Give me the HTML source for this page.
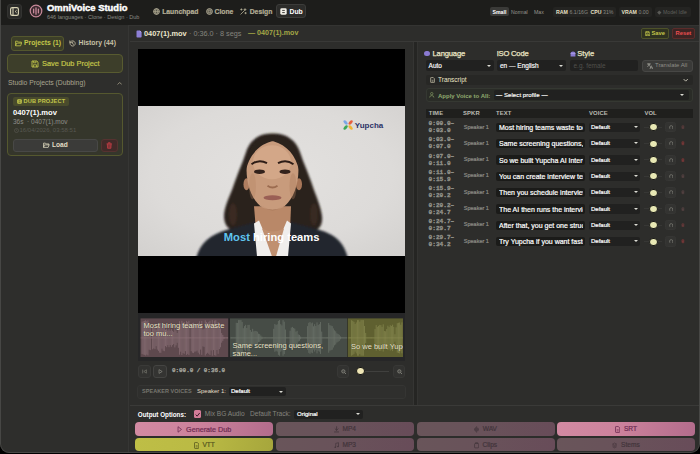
<!DOCTYPE html>
<html><head><meta charset="utf-8"><title>OmniVoice Studio</title>
<style>
*{box-sizing:border-box;margin:0;padding:0}
html,body{width:700px;height:454px;overflow:hidden;background:#000;font-family:"Liberation Sans",sans-serif;}
.a{position:absolute}
.t{position:absolute;white-space:nowrap;line-height:1}
.b{font-weight:bold}
.mono{font-family:"Liberation Mono",monospace}
#win{position:absolute;left:0;top:0;width:699.500px;height:453.300px;background:#2d2d2b;border-radius:0 0 9px 9px;overflow:hidden}
#hdr{position:absolute;left:0;top:0;width:700px;height:25.500px;background:#1d1d1b;border-bottom:1px solid #343432}
#side{position:absolute;left:0;top:25px;width:129px;height:430px;background:#2e2e2c;border-right:1px solid #363634}
.sel{position:absolute;background:#212120;border-radius:2px}
.arr{position:absolute;width:0;height:0;border-left:2.500px solid transparent;border-right:2.500px solid transparent;border-top:2.900px solid #dcdcd4}
.btn{position:absolute;border-radius:4px}
</style></head><body>
<div id="win">
<div id="hdr">
  <div class="a" style="left:7px;top:4px;width:15px;height:15px;border-radius:3px;background:#2a2a28;border:1px solid #333331"></div>
  <svg class="a" style="left:10px;top:7px" width="9" height="9" viewBox="0 0 9 9"><rect x=".6" y=".6" width="7.8" height="7.8" rx="1.6" fill="none" stroke="#d8d2b4" stroke-width="1.2"/><path d="M3 .6v7.8" stroke="#d8d2b4" stroke-width="1.1"/><path d="M6.6 3.2L5.2 4.5l1.4 1.3" fill="none" stroke="#d8d2b4" stroke-width="1"/></svg>
  <svg class="a" style="left:29px;top:4px" width="14" height="14" viewBox="0 0 14 14"><circle cx="7" cy="7" r="5.8" fill="#3a2a2e" stroke="#c8899a" stroke-width="1.2"/><path d="M4.6 5.2v3.6M7 3.8v6.4M9.4 5.2v3.6" stroke="#c8899a" stroke-width="1.3" stroke-linecap="round"/></svg>
  <div class="t b" style="left:47px;top:3px;font-size:9.400px;color:#fff;-webkit-text-stroke:.45px #fff;letter-spacing:.03px">OmniVoice Studio</div>
  <div class="t" style="left:47px;top:15px;font-size:5.5px;color:#8a8a84">646 languages · Clone · Design · Dub</div>
  <svg class="a" style="left:153px;top:8px" width="7" height="7" viewBox="0 0 7 7"><circle cx="3.5" cy="3.5" r="2.9" fill="#b4ae96" fill-opacity=".4" stroke="#b4ae96" stroke-width=".9"/><path d="M.6 3.5h5.8M3.5 .6c-1.6 1.6-1.6 4.2 0 5.8M3.5 .6c1.6 1.6 1.6 4.2 0 5.8" fill="none" stroke="#b4ae96" stroke-width=".6"/></svg>
  <div class="t b" style="left:162.200px;top:9px;font-size:6.800px;color:#b4ae96;-webkit-text-stroke:.2px #b4ae96">Launchpad</div>
  <svg class="a" style="left:206px;top:8px" width="7" height="7" viewBox="0 0 7 7"><circle cx="3.5" cy="3.5" r="2.9" fill="#b4ae96" fill-opacity=".4" stroke="#b4ae96" stroke-width=".9"/><circle cx="3.5" cy="3.5" r="1.3" fill="none" stroke="#b4ae96" stroke-width=".7"/></svg>
  <div class="t b" style="left:214.500px;top:9px;font-size:6.800px;color:#b4ae96;-webkit-text-stroke:.2px #b4ae96">Clone</div>
  <svg class="a" style="left:240px;top:8px" width="7" height="7" viewBox="0 0 7 7"><path d="M.8 6.2L4.4 2.6M5 .6v2M4 1.6h2M1.4 .8v1.4M.7 1.5h1.4M5.6 4.4v1.4M4.9 5.1h1.4" fill="none" stroke="#b4ae96" stroke-width=".8" stroke-linecap="round"/></svg>
  <div class="t b" style="left:249.700px;top:9px;font-size:6.800px;color:#b4ae96;-webkit-text-stroke:.2px #b4ae96">Design</div>
  <div class="a" style="left:275.800px;top:4px;width:30.200px;height:14px;border-radius:3px;background:#2c2c2a;border:1px solid #3c3c3a"></div>
  <svg class="a" style="left:280px;top:8px" width="7" height="7" viewBox="0 0 7 7"><rect x=".3" y=".3" width="6.4" height="6.4" rx="1.4" fill="#f2f0e8"/><path d="M2.2 2.4h2.6M2.2 4.6h2.6" stroke="#2c2c2a" stroke-width=".9"/></svg>
  <div class="t b" style="left:289.500px;top:9px;font-size:6.8px;color:#fff">Dub</div>
  <div class="a" style="left:490px;top:7px;width:19px;height:9px;border-radius:2px;background:#3a3a38"></div>
  <div class="t b" style="left:492.5px;top:9.600px;font-size:5.200px;color:#fff">Small</div>
  <div class="t" style="left:511px;top:9.600px;font-size:5.200px;color:#96968e">Normal</div>
  <div class="t" style="left:534px;top:9.600px;font-size:5.200px;color:#96968e">Max</div>
  <div class="a" style="left:553px;top:6.5px;width:63px;height:10px;border-radius:2px;background:#242422"></div>
  <div class="t b" style="left:556px;top:9.600px;font-size:5.200px;color:#e8e2c6">RAM</div>
  <div class="t" style="left:569.5px;top:9.600px;font-size:5.200px;color:#8a8a84">6.1/16G</div>
  <div class="t b" style="left:590.5px;top:9.600px;font-size:5.200px;color:#e8e2c6">CPU</div>
  <div class="t" style="left:603px;top:9.600px;font-size:5.200px;color:#8a8a84">31%</div>
  <div class="a" style="left:619px;top:6.5px;width:33px;height:10px;border-radius:2px;background:#242422"></div>
  <div class="t b" style="left:621.5px;top:9.600px;font-size:5.200px;color:#e8e2c6">VRAM</div>
  <div class="t" style="left:638.5px;top:9.600px;font-size:5.200px;color:#8a8a84">0.00</div>
  <div class="a" style="left:655px;top:6.5px;width:36px;height:10px;border-radius:2px;background:#242422"></div>
  <div class="a" style="left:658px;top:10.900px;width:2.600px;height:2.600px;transform:rotate(45deg);background:#5a5a56"></div>
  <div class="t" style="left:663px;top:9.600px;font-size:5.200px;color:#5e5e5a">Model Idle</div>
</div>
<div id="side"></div>
<div class="a" style="left:11px;top:36.300px;width:53px;height:14.300px;border-radius:3px;background:#3c3e28;border:1px solid #54572e"></div>
<svg class="a" style="left:15px;top:40px" width="7" height="7" viewBox="0 0 7 7"><path d="M.6 5.8V1.2h2l.8.9h3v1M.6 5.8l1-2.7h5l-1 2.7z" fill="none" stroke="#c3c64a" stroke-width=".8" stroke-linejoin="round"/></svg>
<div class="t b" style="left:24px;top:40.200px;font-size:6.800px;color:#c3c64a">Projects (1)</div>
<svg class="a" style="left:69px;top:40px" width="7" height="7" viewBox="0 0 7 7"><path d="M1 3.5a2.6 2.6 0 1 0 .8-1.9L.8 2.5M.8 .9v1.7h1.7M3.6 2.2v1.5l1 .6" fill="none" stroke="#c6c0a6" stroke-width=".8" stroke-linecap="round" stroke-linejoin="round"/></svg>
<div class="t b" style="left:78.5px;top:40.200px;font-size:6.800px;color:#c6c0a6">History (44)</div>
<div class="a" style="left:7px;top:54px;width:116px;height:18.5px;border-radius:4px;background:#3d3e2a;border:1px solid #585b30"></div>
<svg class="a" style="left:31px;top:59.5px" width="8" height="8" viewBox="0 0 8 8"><path d="M1 1h4.8L7 2.2V7H1z" fill="none" stroke="#c3c64a" stroke-width=".9" stroke-linejoin="round"/><path d="M2.4 1v1.8h2.6V1M2.4 7V4.8h3.2V7" fill="none" stroke="#c3c64a" stroke-width=".8"/></svg>
<div class="t" style="left:42px;top:59.700px;font-size:7.400px;color:#c3c64a;-webkit-text-stroke:.2px #c3c64a">Save Dub Project</div>
<div class="t" style="left:8px;top:80.100px;font-size:6.800px;color:#aaa590">Studio Projects (Dubbing)</div>
<svg class="a" style="left:116.500px;top:81px" width="5.400" height="4.500" viewBox="0 0 6 5"><path d="M1 3.600L3 1.600l2 2" fill="none" stroke="#a8a28c" stroke-width=".9" stroke-linecap="round" stroke-linejoin="round"/></svg>
<div class="a" style="left:7px;top:93px;width:116px;height:62.5px;border-radius:4px;background:#35362b;border:1px solid #55582f"></div>
<div class="a" style="left:13px;top:97px;width:56px;height:8.6px;border-radius:2px;background:#494b2c"></div>
<svg class="a" style="left:16.5px;top:98.8px" width="5" height="5" viewBox="0 0 5 5"><rect x=".2" y=".2" width="4.6" height="4.6" rx="1" fill="#c3c64a"/><path d="M1.5 1.8h2M1.5 3.3h2" stroke="#494b2c" stroke-width=".7"/></svg>
<div class="t b" style="left:23.5px;top:98.7px;font-size:5.6px;color:#c3c64a;letter-spacing:.15px">DUB PROJECT</div>
<div class="t b" style="left:13px;top:108.8px;font-size:7.6px;color:#fff">0407(1).mov</div>
<div class="t" style="left:13px;top:118.800px;font-size:6.500px;color:#8e8e88">36s &nbsp;· 0407(1).mov</div>
<svg class="a" style="left:13.5px;top:127.5px" width="5" height="5" viewBox="0 0 5 5"><circle cx="2.5" cy="2.5" r="2" fill="none" stroke="#5a5a54" stroke-width=".6"/><path d="M2.5 1.4v1.2l.7.4" fill="none" stroke="#5a5a54" stroke-width=".5"/></svg>
<div class="t" style="left:19.5px;top:127.300px;font-size:6px;color:#585852">16/04/2026, 03:58:51</div>
<div class="a" style="left:13px;top:138.6px;width:84.5px;height:13px;border-radius:3px;background:#3b3b39;border:1px solid #484846"></div>
<svg class="a" style="left:43px;top:142px" width="6.5" height="6.5" viewBox="0 0 7 7"><path d="M.6 5.8V1.2h2l.8.9h3v1M.6 5.8l1-2.7h5l-1 2.7z" fill="none" stroke="#e4dec4" stroke-width=".8" stroke-linejoin="round"/></svg>
<div class="t b" style="left:52px;top:142px;font-size:6.6px;color:#e4dec4">Load</div>
<div class="a" style="left:101px;top:138.6px;width:16.5px;height:13px;border-radius:3px;background:#422a29;border:1px solid #553230"></div>
<svg class="a" style="left:106px;top:141.8px" width="6.5" height="7" viewBox="0 0 6.5 7"><path d="M.6 1.8h5.3M2.3 1.6V.7h1.9v.9M1.3 1.9l.3 4.4h3.3l.3-4.4" fill="#c83c44" fill-opacity=".5" stroke="#cc4048" stroke-width=".7" stroke-linejoin="round"/></svg>
<div class="a" style="left:130px;top:41px;width:570px;height:1px;background:#393937"></div>
<svg class="a" style="left:136.200px;top:29.700px" width="6" height="8" viewBox="0 0 6 8"><path d="M.5 1.2Q.5.4 1.3.4H3.8L5.6 2.3V6.8Q5.6 7.6 4.8 7.6H1.3Q.5 7.6.5 6.8z" fill="#8d7fd6"/><path d="M3.8.4V2.3H5.6" fill="#b9aef0"/></svg>
<div class="t b" style="left:144px;top:29.800px;font-size:7.400px;color:#ece6cc">0407(1).mov</div>
<div class="t" style="left:189px;top:30.100px;font-size:7.250px;color:#84847e">· 0:36.0 · 8 segs</div>
<div class="t b" style="left:248px;top:30px;font-size:7.150px;color:#a4a846">— 0407(1).mov</div>
<div class="a" style="left:641px;top:28px;width:27.5px;height:10.5px;border-radius:2px;background:#2f3220;border:1px solid #4e5229"></div>
<svg class="a" style="left:644.5px;top:30.6px" width="5.5" height="5.5" viewBox="0 0 8 8"><path d="M1 1h4.8L7 2.2V7H1z" fill="none" stroke="#c3c64a" stroke-width="1.1" stroke-linejoin="round"/><path d="M2.4 1v1.8h2.6V1M2.4 7V4.8h3.2V7" fill="none" stroke="#c3c64a" stroke-width="1"/></svg>
<div class="t b" style="left:651.5px;top:31px;font-size:5.800px;color:#c3c64a">Save</div>
<div class="a" style="left:672px;top:28px;width:22.5px;height:10.5px;border-radius:2px;background:#3d2423;border:1px solid #5c2c2a"></div>
<div class="t b" style="left:675.5px;top:31px;font-size:5.800px;color:#ea4e50">Reset</div>
<div class="a" style="left:138px;top:49px;width:267px;height:264px;background:#000"></div>
<svg class="a" style="left:138px;top:105.800px" width="267" height="150.500" viewBox="0 0 267 150" preserveAspectRatio="none">
<defs>
<radialGradient id="bg" cx="50%" cy="45%" r="75%"><stop offset="0" stop-color="#e3e1df"/><stop offset=".6" stop-color="#dddbd9"/><stop offset="1" stop-color="#d2d0ce"/></radialGradient>
<filter id="bl" x="-10%" y="-10%" width="120%" height="120%"><feGaussianBlur stdDeviation="1.1"/></filter>
<filter id="bl2" x="-10%" y="-10%" width="120%" height="120%"><feGaussianBlur stdDeviation=".65"/></filter>
<clipPath id="cp"><rect width="267" height="150"/></clipPath>
</defs>
<rect width="267" height="150" fill="url(#bg)"/>
<g clip-path="url(#cp)">
<g filter="url(#bl)">
<path d="M134.500 27.500C121 27 112 34 108 46C104 58 100 66 96 78C92 90 86 100 86 110C86 120 92 125 100 125L172 125C180 125 185 120 184 110C183 100 178 90 174 78C170 66 166 58 162 46C158 34 148 27 134.500 27.500Z" fill="#2b211d"/>
<ellipse cx="95" cy="108" rx="4" ry="11" fill="#3b2b21"/><ellipse cx="176" cy="108" rx="4" ry="11" fill="#382920"/>
<path d="M58 152C62 136 72 128 90 123L116 116L154 116L180 123C198 128 206 136 210 152Z" fill="#22252d"/>
</g>
<g filter="url(#bl2)">
<path d="M116 100L118 124L126 150L146 150L152 124L153 100Z" fill="#b98868"/>
<path d="M116 117L119 150L136 150L127 128L121 114ZM153 117L150 150L136 150L143 128L149 114Z" fill="#f0eeec"/>
<path d="M124 122L134 150L138 150L146 122Q135 128 124 122Z" fill="#c09070"/>
<ellipse cx="108.500" cy="78" rx="3" ry="6" fill="#b07e60"/>
<ellipse cx="161" cy="78" rx="3" ry="6" fill="#a87658"/>
<path d="M108.500 62C108.500 44 119 35 134.500 35C150 35 160.500 44 160.500 62C160.500 80 155 92 147 99.500C140.500 105 128.500 105 122 99.500C114 92 108.500 80 108.500 62Z" fill="#c89b7c"/>
<ellipse cx="134" cy="56" rx="19" ry="17" fill="#d3a788"/><ellipse cx="114.500" cy="80" rx="3.500" ry="13" fill="#b28260" opacity=".3"/><ellipse cx="155" cy="80" rx="3.500" ry="13" fill="#a87858" opacity=".35"/>
<path d="M108 64C107 42 121 29 134.500 29.500C149 29 162 42 161 64C158 50 149 39 136 35.500C135 35 134 35 133 35.500C120 39 111 50 108 64Z" fill="#2b211d"/>
<ellipse cx="121.500" cy="65.500" rx="5.500" ry="2.300" fill="#33211b"/>
<ellipse cx="147" cy="65.500" rx="5.500" ry="2.300" fill="#33211b"/>
<path d="M113.500 58Q121 52.500 129 57M140 57Q148 52.500 155.500 58" stroke="#2e1e18" stroke-width="1.900" fill="none"/>
<ellipse cx="134.500" cy="91.500" rx="9" ry="2.500" fill="#9a5e54"/>
<path d="M129.500 79.500Q134.500 83 139.500 79.500" stroke="#9c6c50" stroke-width="1.800" fill="none"/>
<path d="M123 99Q134.500 108 146 99Q140 104 134.500 104Q129 104 123 99Z" fill="#9c6c50"/>
</g>
</g>
<g transform="translate(210.100,18.900)"><ellipse cx="-2.500" cy="-2.500" rx="2.700" ry="1.500" transform="rotate(45 -2.500 -2.500)" fill="#7aa6e6"/><ellipse cx="2.500" cy="-2.500" rx="2.700" ry="1.500" transform="rotate(-45 2.500 -2.500)" fill="#e6603e"/><ellipse cx="-2.500" cy="2.500" rx="2.700" ry="1.500" transform="rotate(-45 -2.500 2.500)" fill="#3aa85a"/><ellipse cx="2.500" cy="2.500" rx="2.700" ry="1.500" transform="rotate(45 2.500 2.500)" fill="#f0b634"/></g>
<text x="216.800" y="21.900" font-family="Liberation Sans, sans-serif" font-weight="bold" font-size="8" fill="#2c3266">Yupcha</text>
<text x="85.800" y="134.200" font-family="Liberation Sans, sans-serif" font-weight="bold" font-size="11.200" fill="#5fc4ee">Most <tspan fill="#ffffff">hiring teams</tspan></text>
</svg>
<div class="a" style="left:138px;top:313px;width:267px;height:48px;background:#262627"></div><svg class="a" style="left:138px;top:318px" width="267" height="39" viewBox="138 317.600 267 39"><rect x="140.5" y="318" width="87.69999999999999" height="39" fill="#5e494e"/><path d="M142.10 321.3v32.3M143.27 320.8v33.4M144.44 320.5v33.9M145.61 319.9v35.2M146.78 320.8v33.4M147.95 320.0v35.0M149.12 325.6v23.7M150.29 325.1v24.7M151.46 337.1v0.8M152.63 326.2v22.7M153.80 327.0v21.0M154.97 326.3v22.5M156.14 329.2v16.6M157.31 325.9v23.3M158.48 324.4v26.1M159.65 322.8v29.5M160.82 322.6v29.8M161.99 326.7v21.6M163.16 324.6v25.7M164.33 324.2v26.6M165.50 329.3v16.4M166.67 328.3v18.5M167.84 330.2v14.6M169.01 328.2v18.6M170.18 330.3v14.4M171.35 328.7v17.7M172.52 330.4v14.3M173.69 331.4v12.3M174.86 328.0v19.0M176.03 330.0v15.0M177.20 332.6v9.8M178.37 327.5v19.9M179.54 320.8v33.5M180.71 323.7v27.6M181.88 320.4v34.2M183.05 322.3v30.4M184.22 321.6v31.8M185.39 324.3v26.5M186.56 320.5v34.0M187.73 321.6v31.9M188.90 320.4v34.2M190.07 337.1v0.8M191.24 324.2v26.6M192.41 322.7v29.6M193.58 322.3v30.4M194.75 323.7v27.6M195.92 323.9v27.2M197.09 324.7v25.5M198.26 322.7v29.6M199.43 320.9v33.1M200.60 325.9v23.3M201.77 320.6v33.9M202.94 329.1v16.9M204.11 328.4v18.1M205.28 319.9v35.2M206.45 321.6v31.8M207.62 322.6v29.8M208.79 321.6v31.8M209.96 320.4v34.2M211.13 324.8v25.3M212.30 319.7v35.6M213.47 325.4v24.3M214.64 320.2v34.6M215.81 319.8v35.5M216.98 325.5v24.1M218.15 321.7v31.7M219.32 326.2v22.5M220.49 328.1v18.8M221.66 332.7v9.6M222.83 334.5v6.0M224.00 336.5v2.0M225.17 337.1v0.8M226.34 337.1v0.8M227.51 337.1v0.8" stroke="#94797f" stroke-width=".6" fill="none"/><path d="M140.5 337.5H228.2" stroke="#94797f" stroke-width=".5"/><rect x="230" y="318" width="117" height="39" fill="#464c46"/><path d="M231.60 337.1v0.8M232.77 337.1v0.8M233.94 337.1v0.8M235.11 337.1v0.8M236.28 322.4v30.2M237.45 322.6v29.8M238.62 319.7v35.6M239.79 319.7v35.6M240.96 319.7v35.6M242.13 321.5v32.1M243.30 327.8v19.3M244.47 325.7v23.5M245.64 324.4v26.1M246.81 327.6v19.9M247.98 324.5v25.9M249.15 324.4v26.3M250.32 329.6v15.7M251.49 331.4v12.2M252.66 328.4v18.2M253.83 331.0v13.1M255.00 330.4v14.2M256.17 330.7v13.5M257.34 331.3v12.4M258.51 333.3v8.4M259.68 333.7v7.7M260.85 335.1v4.8M262.02 336.3v2.4M263.19 337.1v0.8M264.36 337.1v0.8M265.53 337.1v0.8M266.70 337.1v0.8M267.87 337.1v0.8M269.04 337.1v0.8M270.21 337.1v0.8M271.38 337.1v0.8M272.55 337.1v0.8M273.72 328.4v18.2M274.89 323.6v27.8M276.06 324.6v25.8M277.23 323.9v27.3M278.40 320.5v34.0M279.57 319.7v35.6M280.74 323.8v27.5M281.91 325.0v25.1M283.08 319.7v35.6M284.25 321.3v32.4M285.42 329.1v16.7M286.59 337.1v0.8M287.76 337.1v0.8M288.93 337.1v0.8M290.10 330.3v14.4M291.27 327.2v20.7M292.44 326.5v22.1M293.61 327.6v19.7M294.78 328.2v18.7M295.95 331.2v12.5M297.12 330.4v14.1M298.29 334.0v7.1M299.46 334.6v5.8M300.63 336.1v2.7M301.80 337.1v0.8M302.97 337.1v0.8M304.14 337.1v0.8M305.31 337.1v0.8M306.48 337.1v0.8M307.65 325.7v23.6M308.82 322.4v30.1M309.99 321.6v31.8M311.16 322.9v29.2M312.33 322.2v30.6M313.50 325.9v23.2M314.67 323.8v27.4M315.84 325.6v23.9M317.01 322.0v31.0M318.18 324.6v25.8M319.35 323.7v27.6M320.52 321.6v31.9M321.69 331.2v12.6M322.86 337.1v0.8M324.03 337.1v0.8M325.20 337.1v0.8M326.37 337.1v0.8M327.54 337.1v0.8M328.71 322.6v29.7M329.88 324.7v25.6M331.05 325.2v24.6M332.22 325.7v23.6M333.39 328.0v19.1M334.56 329.9v15.1M335.73 330.9v13.2M336.90 332.9v9.3M338.07 333.6v7.8M339.24 334.4v6.1M340.41 336.0v2.9M341.58 337.1v0.8M342.75 337.1v0.8M343.92 337.1v0.8M345.09 337.1v0.8M346.26 337.1v0.8" stroke="#767d73" stroke-width=".6" fill="none"/><path d="M230 337.5H347" stroke="#767d73" stroke-width=".5"/><rect x="347.7" y="318" width="55.30000000000001" height="39" fill="#5f6030"/><path d="M349.30 337.1v0.8M350.47 337.1v0.8M351.64 319.8v35.5M352.81 320.5v34.0M353.98 321.5v32.0M355.15 323.6v27.7M356.32 322.0v31.0M357.49 319.7v35.6M358.66 319.7v35.6M359.83 321.3v32.3M361.00 319.7v35.6M362.17 319.7v35.6M363.34 319.7v35.6M364.51 325.6v23.8M365.68 332.5v10.1M366.85 337.1v0.8M368.02 337.1v0.8M369.19 337.1v0.8M370.36 337.1v0.8M371.53 337.1v0.8M372.70 337.1v0.8M373.87 337.1v0.8M375.04 328.7v17.6M376.21 324.7v25.6M377.38 326.5v22.0M378.55 325.5v23.9M379.72 324.5v26.1M380.89 324.7v25.5M382.06 326.4v22.1M383.23 323.9v27.3M384.40 330.6v13.9M385.57 330.9v13.2M386.74 328.6v17.8M387.91 325.3v24.4M389.08 326.7v21.7M390.25 324.8v25.4M391.42 325.6v23.7M392.59 324.3v26.4M393.76 326.5v21.9M394.93 333.8v7.5M396.10 326.9v21.2M397.27 322.8v29.4M398.44 322.4v30.2M399.61 322.1v30.9M400.78 324.3v26.5M401.95 322.0v31.0" stroke="#8f9156" stroke-width=".6" fill="none"/><path d="M347.7 337.5H403" stroke="#8f9156" stroke-width=".5"/></svg><div class="t" style="left:143.5px;top:322px;font-size:7.500px;line-height:8.400px;color:#ece6cc;text-shadow:0 0 1px rgba(0,0,0,.5);white-space:normal;width:84px">Most hiring teams waste too mu...</div>
<div class="t" style="left:232.5px;top:342px;font-size:7.500px;line-height:8.400px;color:#ece6cc;text-shadow:0 0 1px rgba(0,0,0,.5);white-space:normal;width:100px">Same screening questions, same...</div>
<div class="t" style="left:351px;top:343.300px;font-size:7.500px;color:#ece6cc;text-shadow:0 0 1px rgba(0,0,0,.5);width:52px;overflow:hidden">So we built Yupcha</div>
<div class="a" style="left:138px;top:365px;width:13px;height:13px;border-radius:3px;background:#323230;border:1px solid #3a3a38"></div>
<svg class="a" style="left:142px;top:369px" width="5" height="5" viewBox="0 0 5 5"><path d="M.7.6v3.8M4.4.8L1.8 2.5l2.6 1.7z" fill="none" stroke="#77776f" stroke-width=".7" stroke-linejoin="round"/></svg>
<div class="a" style="left:153px;top:365px;width:13.5px;height:13px;border-radius:3px;background:#343432;border:1px solid #444442"></div>
<svg class="a" style="left:157.5px;top:369px" width="5" height="5" viewBox="0 0 5 5"><path d="M1 .6l3.2 1.9L1 4.4z" fill="none" stroke="#8a8a82" stroke-width=".7" stroke-linejoin="round"/></svg>
<div class="t mono b" style="left:172px;top:368.3px;font-size:5.900px;color:#a6a69e;-webkit-text-stroke:.25px #a6a69e">0:00.0 / 0:36.0</div>
<div class="a" style="left:337.300px;top:365.300px;width:12.200px;height:13px;border-radius:3px;background:#323230;border:1px solid #383836"></div>
<svg class="a" style="left:340.600px;top:368.900px" width="5.600" height="5.600" viewBox="0 0 5 5"><circle cx="2.1" cy="2.1" r="1.5" fill="#85857d" fill-opacity=".3" stroke="#85857d" stroke-width=".7"/><path d="M3.2 3.2l1.300 1.300" stroke="#85857d" stroke-width=".8"/></svg>
<div class="a" style="left:357px;top:370.700px;width:31.500px;height:1px;background:#40403e"></div>
<div class="a" style="left:356.400px;top:367px;width:8.400px;height:8.400px;border-radius:5px;background:#efe6b6;border:1px solid #141412"></div>
<div class="a" style="left:393px;top:365.300px;width:12.400px;height:13px;border-radius:3px;background:#323230;border:1px solid #383836"></div>
<svg class="a" style="left:396.500px;top:368.900px" width="5.600" height="5.600" viewBox="0 0 5 5"><circle cx="2.1" cy="2.1" r="1.5" fill="#85857d" fill-opacity=".3" stroke="#85857d" stroke-width=".7"/><path d="M3.2 3.2l1.300 1.300" stroke="#85857d" stroke-width=".8"/></svg>
<div class="a" style="left:137px;top:384.5px;width:268.5px;height:14.5px;border-radius:3px;background:#2f2f2d;border:1px solid #353533"></div>
<div class="t b" style="left:142px;top:388.800px;font-size:5.500px;color:#77776f;letter-spacing:.05px">SPEAKER VOICES</div>
<div class="t" style="left:197px;top:388.400px;font-size:6px;color:#e4dec4">Speaker 1:</div>
<div class="sel" style="left:228.5px;top:386.7px;width:57px;height:9.6px"></div>
<div class="t" style="left:231px;top:388.3px;font-size:6px;color:#fff;-webkit-text-stroke:.2px #fff">Default</div>
<div class="arr" style="left:278.5px;top:390.5px"></div>
<div class="a" style="left:412.800px;top:42px;width:5.400px;height:363.500px;background:#252523;border-left:1px solid #353533;border-right:1px solid #333331"></div>
<div class="a" style="left:424.300px;top:50.800px;width:5.400px;height:5.400px;border-radius:3px;background:#8a7ad2"></div>
<div class="t" style="left:432.5px;top:50.3px;font-size:7.600px;letter-spacing:-.15px;color:#ece6c6;-webkit-text-stroke:.25px #ece6c6">Language</div>
<div class="t" style="left:496.7px;top:50.3px;font-size:7.600px;letter-spacing:-.2px;color:#ece6c6;-webkit-text-stroke:.25px #ece6c6">ISO Code</div>
<svg class="a" style="left:569.5px;top:51px" width="6" height="6" viewBox="0 0 6 6"><path d="M.6 2.2Q.6 .4 3 .4Q5.400 .4 5.400 2.200V5.600H.6z" fill="#8a7ad2"/><path d="M.6 2.4h4.8" stroke="#b9aef0" stroke-width=".6"/></svg>
<div class="t" style="left:577.3px;top:50.3px;font-size:7.6px;color:#ece6c6;-webkit-text-stroke:.25px #ece6c6">Style</div>
<div class="sel" style="left:425.5px;top:60.3px;width:68px;height:11px"></div>
<div class="t" style="left:428.6px;top:62.5px;font-size:6.5px;color:#fff;-webkit-text-stroke:.15px #fff">Auto</div>
<div class="arr" style="left:486.5px;top:64.8px"></div>
<div class="sel" style="left:497px;top:60.3px;width:68.5px;height:11px"></div>
<div class="t" style="left:500px;top:62.5px;font-size:6.5px;color:#fff;-webkit-text-stroke:.15px #fff">en — English</div>
<div class="arr" style="left:558.5px;top:64.8px"></div>
<div class="sel" style="left:570.3px;top:60.3px;width:67.5px;height:11px"></div>
<div class="t" style="left:573.5px;top:62.5px;font-size:6.5px;color:#50504c">e.g. female</div>
<div class="a" style="left:642px;top:60.3px;width:50.5px;height:11.5px;border-radius:3px;background:#3a3a38;border:1px solid #474745"></div>
<svg class="a" style="left:647px;top:63px" width="6" height="6" viewBox="0 0 6 6"><path d="M.4 1h3M1.9.4V1M1 1Q1.600 2.800 3.300 3.400M2.900 1Q2.400 2.800 .5 3.500M3 5.700L4.300 2.700L5.600 5.700M3.500 4.800H5.100" fill="none" stroke="#a8a8a0" stroke-width=".6" stroke-linecap="round"/></svg>
<div class="t" style="left:655px;top:63px;font-size:5.9px;color:#8e8e88">Translate All</div>
<div class="a" style="left:425.5px;top:75.3px;width:267px;height:10px;border-radius:2px;background:#272725"></div>
<svg class="a" style="left:429.5px;top:77.3px" width="5" height="6" viewBox="0 0 6 8"><path d="M.6 1.200Q.600 .500 1.300 .500H3.800L5.500 2.300V6.800Q5.500 7.500 4.800 7.500H1.300Q.6 7.500 .6 6.800z" fill="none" stroke="#d8d2b8" stroke-width=".9"/><path d="M2 4.300h2.200M2 5.700h2.200" stroke="#d8d2b8" stroke-width=".7"/></svg>
<div class="t" style="left:438px;top:77.3px;font-size:6.5px;color:#ece6c6">Transcript</div>
<svg class="a" style="left:682.500px;top:77.600px" width="5.400" height="4.500" viewBox="0 0 6 5"><path d="M1 1.500L3 3.500l2-2" fill="none" stroke="#e4e0d0" stroke-width=".9" stroke-linecap="round" stroke-linejoin="round"/></svg>
<div class="a" style="left:425.5px;top:88.3px;width:267px;height:14px;border-radius:3px;background:#2a2c27;border:1px solid #353832"></div>
<svg class="a" style="left:429px;top:92.3px" width="5.5" height="6" viewBox="0 0 6 6.500"><circle cx="3" cy="1.800" r="1.300" fill="none" stroke="#88a068" stroke-width=".7"/><path d="M.7 6Q.700 3.900 3 3.900Q5.300 3.900 5.300 6" fill="none" stroke="#88a068" stroke-width=".7"/></svg>
<div class="t b" style="left:438px;top:92.6px;font-size:6px;color:#90aa6e">Apply Voice to All:</div>
<div class="sel" style="left:494px;top:90.4px;width:195px;height:9.800px"></div>
<div class="t" style="left:496px;top:92.200px;font-size:6.200px;color:#fff;-webkit-text-stroke:.15px #fff">— Select profile —</div>
<div class="arr" style="left:680px;top:94.300px"></div>
<div class="a" style="left:425.500px;top:108.600px;width:267px;height:9.800px;background:#1f1f1d"></div>
<div class="t b" style="left:428.7px;top:110.600px;font-size:5.900px;color:#babab2;letter-spacing:.1px">TIME</div>
<div class="t b" style="left:463px;top:110.600px;font-size:5.900px;color:#babab2;letter-spacing:.1px">SPKR</div>
<div class="t b" style="left:496px;top:110.600px;font-size:5.900px;color:#babab2;letter-spacing:.1px">TEXT</div>
<div class="t b" style="left:589px;top:110.600px;font-size:5.900px;color:#babab2;letter-spacing:.1px">VOICE</div>
<div class="t b" style="left:644.4px;top:110.600px;font-size:5.900px;color:#babab2;letter-spacing:.1px">VOL</div>
<div class="t mono b" style="left:428.600px;top:120.00px;font-size:6.100px;line-height:7px;color:#94948c;-webkit-text-stroke:.3px #94948c;white-space:pre">0:00.0–
0:03.0</div>
<div class="t" style="left:463.800px;top:124.50px;font-size:5.500px;color:#8c8c86;-webkit-text-stroke:.2px #8c8c86">Speaker 1</div>
<div class="a" style="left:496.400px;top:122.60px;width:88.600px;height:9.400px;border-radius:2px;background:#1b1b19"><div class="a" style="left:2.600px;top:0;width:83.600px;height:9.400px;overflow:hidden"><div class="t" style="left:0;top:1.300px;font-size:7px;color:#fff;-webkit-text-stroke:.2px #fff">Most hiring teams waste too much</div></div></div>
<div class="sel" style="left:589px;top:122.60px;width:51px;height:9.400px"></div>
<div class="t" style="left:591px;top:124.00px;font-size:6px;color:#fff;-webkit-text-stroke:.2px #fff">Default</div>
<div class="arr" style="left:633.800px;top:126.10px"></div>
<div class="a" style="left:644px;top:126.80px;width:18px;height:1px;background:#373735"></div>
<div class="a" style="left:649.400px;top:123.20px;width:8.200px;height:8.200px;border-radius:5px;background:#e8e8b4;border:1px solid #181816"></div>
<div class="a" style="left:665px;top:121.90px;width:11.400px;height:10.600px;border-radius:2.500px;background:#333331;border:1px solid #363634"></div>
<svg class="a" style="left:668.500px;top:125.10px" width="4.400" height="4.400" viewBox="0 0 5 5"><path d="M.7 3.600V2.500a1.800 1.800 0 0 1 3.600 0v1.100" fill="none" stroke="#85857d" stroke-width=".75"/><path d="M.7 3h.7v1.400H.7zM3.600 3h.7v1.400h-.7z" fill="#85857d"/></svg>
<svg class="a" style="left:681.300px;top:125.10px" width="3.800" height="4.400" viewBox="0 0 6.500 7"><path d="M.6 1.800h5.300M2.300 1.600V.7h1.900v.9M1.300 1.900l.3 4.400h3.300l.3-4.400" fill="#583c3c" stroke="#583c3c" stroke-width=".8" stroke-linejoin="round"/></svg>
<div class="t mono b" style="left:428.600px;top:136.33px;font-size:6.100px;line-height:7px;color:#94948c;-webkit-text-stroke:.3px #94948c;white-space:pre">0:03.0–
0:07.0</div>
<div class="t" style="left:463.800px;top:140.83px;font-size:5.500px;color:#8c8c86;-webkit-text-stroke:.2px #8c8c86">Speaker 1</div>
<div class="a" style="left:496.400px;top:138.93px;width:88.600px;height:9.400px;border-radius:2px;background:#1b1b19"><div class="a" style="left:2.600px;top:0;width:83.600px;height:9.400px;overflow:hidden"><div class="t" style="left:0;top:1.300px;font-size:7px;color:#fff;-webkit-text-stroke:.2px #fff">Same screening questions, same</div></div></div>
<div class="sel" style="left:589px;top:138.93px;width:51px;height:9.400px"></div>
<div class="t" style="left:591px;top:140.33px;font-size:6px;color:#fff;-webkit-text-stroke:.2px #fff">Default</div>
<div class="arr" style="left:633.800px;top:142.43px"></div>
<div class="a" style="left:644px;top:143.13px;width:18px;height:1px;background:#373735"></div>
<div class="a" style="left:649.400px;top:139.53px;width:8.200px;height:8.200px;border-radius:5px;background:#e8e8b4;border:1px solid #181816"></div>
<div class="a" style="left:665px;top:138.23px;width:11.400px;height:10.600px;border-radius:2.500px;background:#333331;border:1px solid #363634"></div>
<svg class="a" style="left:668.500px;top:141.43px" width="4.400" height="4.400" viewBox="0 0 5 5"><path d="M.7 3.600V2.500a1.800 1.800 0 0 1 3.600 0v1.100" fill="none" stroke="#85857d" stroke-width=".75"/><path d="M.7 3h.7v1.400H.7zM3.600 3h.7v1.400h-.7z" fill="#85857d"/></svg>
<svg class="a" style="left:681.300px;top:141.43px" width="3.800" height="4.400" viewBox="0 0 6.500 7"><path d="M.6 1.800h5.300M2.300 1.600V.7h1.900v.9M1.300 1.900l.3 4.400h3.300l.3-4.400" fill="#743838" stroke="#743838" stroke-width=".8" stroke-linejoin="round"/></svg>
<div class="t mono b" style="left:428.600px;top:152.66px;font-size:6.100px;line-height:7px;color:#94948c;-webkit-text-stroke:.3px #94948c;white-space:pre">0:07.0–
0:11.0</div>
<div class="t" style="left:463.800px;top:157.16px;font-size:5.500px;color:#8c8c86;-webkit-text-stroke:.2px #8c8c86">Speaker 1</div>
<div class="a" style="left:496.400px;top:155.26px;width:88.600px;height:9.400px;border-radius:2px;background:#1b1b19"><div class="a" style="left:2.600px;top:0;width:83.600px;height:9.400px;overflow:hidden"><div class="t" style="left:0;top:1.300px;font-size:7px;color:#fff;-webkit-text-stroke:.2px #fff">So we built Yupcha AI Interviewer</div></div></div>
<div class="sel" style="left:589px;top:155.26px;width:51px;height:9.400px"></div>
<div class="t" style="left:591px;top:156.66px;font-size:6px;color:#fff;-webkit-text-stroke:.2px #fff">Default</div>
<div class="arr" style="left:633.800px;top:158.76px"></div>
<div class="a" style="left:644px;top:159.46px;width:18px;height:1px;background:#373735"></div>
<div class="a" style="left:649.400px;top:155.86px;width:8.200px;height:8.200px;border-radius:5px;background:#e8e8b4;border:1px solid #181816"></div>
<div class="a" style="left:665px;top:154.56px;width:11.400px;height:10.600px;border-radius:2.500px;background:#333331;border:1px solid #363634"></div>
<svg class="a" style="left:668.500px;top:157.76px" width="4.400" height="4.400" viewBox="0 0 5 5"><path d="M.7 3.600V2.500a1.800 1.800 0 0 1 3.600 0v1.100" fill="none" stroke="#85857d" stroke-width=".75"/><path d="M.7 3h.7v1.400H.7zM3.600 3h.7v1.400h-.7z" fill="#85857d"/></svg>
<svg class="a" style="left:681.300px;top:157.76px" width="3.800" height="4.400" viewBox="0 0 6.500 7"><path d="M.6 1.800h5.300M2.300 1.600V.7h1.900v.9M1.300 1.900l.3 4.400h3.300l.3-4.400" fill="#743838" stroke="#743838" stroke-width=".8" stroke-linejoin="round"/></svg>
<div class="t mono b" style="left:428.600px;top:168.99px;font-size:6.100px;line-height:7px;color:#94948c;-webkit-text-stroke:.3px #94948c;white-space:pre">0:11.0–
0:15.9</div>
<div class="t" style="left:463.800px;top:173.49px;font-size:5.500px;color:#8c8c86;-webkit-text-stroke:.2px #8c8c86">Speaker 1</div>
<div class="a" style="left:496.400px;top:171.59px;width:88.600px;height:9.400px;border-radius:2px;background:#1b1b19"><div class="a" style="left:2.600px;top:0;width:83.600px;height:9.400px;overflow:hidden"><div class="t" style="left:0;top:1.300px;font-size:7px;color:#fff;-webkit-text-stroke:.2px #fff">You can create interview templates</div></div></div>
<div class="sel" style="left:589px;top:171.59px;width:51px;height:9.400px"></div>
<div class="t" style="left:591px;top:172.99px;font-size:6px;color:#fff;-webkit-text-stroke:.2px #fff">Default</div>
<div class="arr" style="left:633.800px;top:175.09px"></div>
<div class="a" style="left:644px;top:175.79px;width:18px;height:1px;background:#373735"></div>
<div class="a" style="left:649.400px;top:172.19px;width:8.200px;height:8.200px;border-radius:5px;background:#e8e8b4;border:1px solid #181816"></div>
<div class="a" style="left:665px;top:170.89px;width:11.400px;height:10.600px;border-radius:2.500px;background:#333331;border:1px solid #363634"></div>
<svg class="a" style="left:668.500px;top:174.09px" width="4.400" height="4.400" viewBox="0 0 5 5"><path d="M.7 3.600V2.500a1.800 1.800 0 0 1 3.600 0v1.100" fill="none" stroke="#85857d" stroke-width=".75"/><path d="M.7 3h.7v1.400H.7zM3.600 3h.7v1.400h-.7z" fill="#85857d"/></svg>
<svg class="a" style="left:681.300px;top:174.09px" width="3.800" height="4.400" viewBox="0 0 6.500 7"><path d="M.6 1.800h5.300M2.300 1.600V.7h1.900v.9M1.300 1.900l.3 4.400h3.300l.3-4.400" fill="#524040" stroke="#524040" stroke-width=".8" stroke-linejoin="round"/></svg>
<div class="t mono b" style="left:428.600px;top:185.32px;font-size:6.100px;line-height:7px;color:#94948c;-webkit-text-stroke:.3px #94948c;white-space:pre">0:15.9–
0:20.2</div>
<div class="t" style="left:463.800px;top:189.82px;font-size:5.500px;color:#8c8c86;-webkit-text-stroke:.2px #8c8c86">Speaker 1</div>
<div class="a" style="left:496.400px;top:187.92px;width:88.600px;height:9.400px;border-radius:2px;background:#1b1b19"><div class="a" style="left:2.600px;top:0;width:83.600px;height:9.400px;overflow:hidden"><div class="t" style="left:0;top:1.300px;font-size:7px;color:#fff;-webkit-text-stroke:.2px #fff">Then you schedule interviews</div></div></div>
<div class="sel" style="left:589px;top:187.92px;width:51px;height:9.400px"></div>
<div class="t" style="left:591px;top:189.32px;font-size:6px;color:#fff;-webkit-text-stroke:.2px #fff">Default</div>
<div class="arr" style="left:633.800px;top:191.42px"></div>
<div class="a" style="left:644px;top:192.12px;width:18px;height:1px;background:#373735"></div>
<div class="a" style="left:649.400px;top:188.52px;width:8.200px;height:8.200px;border-radius:5px;background:#e8e8b4;border:1px solid #181816"></div>
<div class="a" style="left:665px;top:187.22px;width:11.400px;height:10.600px;border-radius:2.500px;background:#333331;border:1px solid #363634"></div>
<svg class="a" style="left:668.500px;top:190.42px" width="4.400" height="4.400" viewBox="0 0 5 5"><path d="M.7 3.600V2.500a1.800 1.800 0 0 1 3.600 0v1.100" fill="none" stroke="#85857d" stroke-width=".75"/><path d="M.7 3h.7v1.400H.7zM3.600 3h.7v1.400h-.7z" fill="#85857d"/></svg>
<svg class="a" style="left:681.300px;top:190.42px" width="3.800" height="4.400" viewBox="0 0 6.500 7"><path d="M.6 1.800h5.300M2.300 1.600V.7h1.900v.9M1.300 1.900l.3 4.400h3.300l.3-4.400" fill="#524040" stroke="#524040" stroke-width=".8" stroke-linejoin="round"/></svg>
<div class="t mono b" style="left:428.600px;top:201.65px;font-size:6.100px;line-height:7px;color:#94948c;-webkit-text-stroke:.3px #94948c;white-space:pre">0:20.2–
0:24.7</div>
<div class="t" style="left:463.800px;top:206.15px;font-size:5.500px;color:#8c8c86;-webkit-text-stroke:.2px #8c8c86">Speaker 1</div>
<div class="a" style="left:496.400px;top:204.25px;width:88.600px;height:9.400px;border-radius:2px;background:#1b1b19"><div class="a" style="left:2.600px;top:0;width:83.600px;height:9.400px;overflow:hidden"><div class="t" style="left:0;top:1.300px;font-size:7px;color:#fff;-webkit-text-stroke:.2px #fff">The AI then runs the interview</div></div></div>
<div class="sel" style="left:589px;top:204.25px;width:51px;height:9.400px"></div>
<div class="t" style="left:591px;top:205.65px;font-size:6px;color:#fff;-webkit-text-stroke:.2px #fff">Default</div>
<div class="arr" style="left:633.800px;top:207.75px"></div>
<div class="a" style="left:644px;top:208.45px;width:18px;height:1px;background:#373735"></div>
<div class="a" style="left:649.400px;top:204.85px;width:8.200px;height:8.200px;border-radius:5px;background:#e8e8b4;border:1px solid #181816"></div>
<div class="a" style="left:665px;top:203.55px;width:11.400px;height:10.600px;border-radius:2.500px;background:#333331;border:1px solid #363634"></div>
<svg class="a" style="left:668.500px;top:206.75px" width="4.400" height="4.400" viewBox="0 0 5 5"><path d="M.7 3.600V2.500a1.800 1.800 0 0 1 3.600 0v1.100" fill="none" stroke="#85857d" stroke-width=".75"/><path d="M.7 3h.7v1.400H.7zM3.600 3h.7v1.400h-.7z" fill="#85857d"/></svg>
<svg class="a" style="left:681.300px;top:206.75px" width="3.800" height="4.400" viewBox="0 0 6.500 7"><path d="M.6 1.800h5.300M2.300 1.600V.7h1.900v.9M1.300 1.900l.3 4.400h3.300l.3-4.400" fill="#524040" stroke="#524040" stroke-width=".8" stroke-linejoin="round"/></svg>
<div class="t mono b" style="left:428.600px;top:217.98px;font-size:6.100px;line-height:7px;color:#94948c;-webkit-text-stroke:.3px #94948c;white-space:pre">0:24.7–
0:29.7</div>
<div class="t" style="left:463.800px;top:222.48px;font-size:5.500px;color:#8c8c86;-webkit-text-stroke:.2px #8c8c86">Speaker 1</div>
<div class="a" style="left:496.400px;top:220.58px;width:88.600px;height:9.400px;border-radius:2px;background:#1b1b19"><div class="a" style="left:2.600px;top:0;width:83.600px;height:9.400px;overflow:hidden"><div class="t" style="left:0;top:1.300px;font-size:7px;color:#fff;-webkit-text-stroke:.2px #fff">After that, you get one structured</div></div></div>
<div class="sel" style="left:589px;top:220.58px;width:51px;height:9.400px"></div>
<div class="t" style="left:591px;top:221.98px;font-size:6px;color:#fff;-webkit-text-stroke:.2px #fff">Default</div>
<div class="arr" style="left:633.800px;top:224.08px"></div>
<div class="a" style="left:644px;top:224.78px;width:18px;height:1px;background:#373735"></div>
<div class="a" style="left:649.400px;top:221.18px;width:8.200px;height:8.200px;border-radius:5px;background:#e8e8b4;border:1px solid #181816"></div>
<div class="a" style="left:665px;top:219.88px;width:11.400px;height:10.600px;border-radius:2.500px;background:#333331;border:1px solid #363634"></div>
<svg class="a" style="left:668.500px;top:223.08px" width="4.400" height="4.400" viewBox="0 0 5 5"><path d="M.7 3.600V2.500a1.800 1.800 0 0 1 3.600 0v1.100" fill="none" stroke="#85857d" stroke-width=".75"/><path d="M.7 3h.7v1.400H.7zM3.600 3h.7v1.400h-.7z" fill="#85857d"/></svg>
<svg class="a" style="left:681.300px;top:223.08px" width="3.800" height="4.400" viewBox="0 0 6.500 7"><path d="M.6 1.800h5.300M2.300 1.600V.7h1.900v.9M1.300 1.900l.3 4.400h3.300l.3-4.400" fill="#643a3a" stroke="#643a3a" stroke-width=".8" stroke-linejoin="round"/></svg>
<div class="t mono b" style="left:428.600px;top:234.31px;font-size:6.100px;line-height:7px;color:#94948c;-webkit-text-stroke:.3px #94948c;white-space:pre">0:29.7–
0:34.2</div>
<div class="t" style="left:463.800px;top:238.81px;font-size:5.500px;color:#8c8c86;-webkit-text-stroke:.2px #8c8c86">Speaker 1</div>
<div class="a" style="left:496.400px;top:236.91px;width:88.600px;height:9.400px;border-radius:2px;background:#1b1b19"><div class="a" style="left:2.600px;top:0;width:83.600px;height:9.400px;overflow:hidden"><div class="t" style="left:0;top:1.300px;font-size:7px;color:#fff;-webkit-text-stroke:.2px #fff">Try Yupcha if you want faster</div></div></div>
<div class="sel" style="left:589px;top:236.91px;width:51px;height:9.400px"></div>
<div class="t" style="left:591px;top:238.31px;font-size:6px;color:#fff;-webkit-text-stroke:.2px #fff">Default</div>
<div class="arr" style="left:633.800px;top:240.41px"></div>
<div class="a" style="left:644px;top:241.11px;width:18px;height:1px;background:#373735"></div>
<div class="a" style="left:649.400px;top:237.51px;width:8.200px;height:8.200px;border-radius:5px;background:#e8e8b4;border:1px solid #181816"></div>
<div class="a" style="left:665px;top:236.21px;width:11.400px;height:10.600px;border-radius:2.500px;background:#333331;border:1px solid #363634"></div>
<svg class="a" style="left:668.500px;top:239.41px" width="4.400" height="4.400" viewBox="0 0 5 5"><path d="M.7 3.600V2.500a1.800 1.800 0 0 1 3.600 0v1.100" fill="none" stroke="#85857d" stroke-width=".75"/><path d="M.7 3h.7v1.400H.7zM3.600 3h.7v1.400h-.7z" fill="#85857d"/></svg>
<svg class="a" style="left:681.300px;top:239.41px" width="3.800" height="4.400" viewBox="0 0 6.500 7"><path d="M.6 1.800h5.300M2.300 1.600V.7h1.900v.9M1.300 1.900l.3 4.400h3.300l.3-4.400" fill="#743838" stroke="#743838" stroke-width=".8" stroke-linejoin="round"/></svg>
<div class="a" style="left:130px;top:405.400px;width:570px;height:1px;background:#3a3a38"></div>
<div class="t b" style="left:137.800px;top:411.500px;font-size:6.300px;color:#fff">Output Options:</div>
<div class="a" style="left:193.500px;top:410.400px;width:7.400px;height:7.600px;border-radius:1.500px;background:#d37c98"></div>
<svg class="a" style="left:194.500px;top:411.600px" width="5.400" height="5.400" viewBox="0 0 6 6"><path d="M1 3.200l1.400 1.400L5 1.400" fill="none" stroke="#3a1a26" stroke-width="1.100" stroke-linecap="round" stroke-linejoin="round"/></svg>
<div class="t" style="left:204.700px;top:411px;font-size:6.600px;color:#84847e">Mix BG Audio</div>
<div class="t" style="left:250px;top:411px;font-size:6.600px;color:#84847e">Default Track:</div>
<div class="sel" style="left:294.200px;top:409.500px;width:69px;height:9.600px;background:#212120"></div>
<div class="t" style="left:297px;top:411.200px;font-size:6px;color:#fff;-webkit-text-stroke:.2px #fff">Original</div>
<div class="arr" style="left:355.700px;top:413.200px"></div>
<div class="btn" style="left:135.3px;top:421.7px;width:138px;height:14.7px;background:linear-gradient(100deg,#d28aa2 0%,#cc829c 45%,#b36c8c 100%);display:flex;align-items:center;justify-content:center;gap:3.500px;padding-top:1.200px;color:#6c2a50;font-size:7.2px"><svg width="5.200" height="6.900" viewBox="0 0 6 8"><path d="M1.200 .8L5.200 4L1.200 7.200z" fill="none" stroke="#6c2a50" stroke-width=".9" stroke-linejoin="round"/></svg><span style="line-height:1;white-space:nowrap;-webkit-text-stroke:.2px #6c2a50">Generate Dub</span></div>
<div class="btn" style="left:275.9px;top:421.7px;width:138px;height:14.7px;background:linear-gradient(100deg,#69555a 0%,#69525a 50%,#684c59 100%);display:flex;align-items:center;justify-content:center;gap:3.500px;padding-top:1.200px;color:#42343a;font-size:6.6px"><svg width="5.200" height="6.900" viewBox="0 0 6 8"><path d="M3 .8v4M1.300 3.300L3 5l1.700-1.700M.6 6.900h4.800" fill="none" stroke="#42343a" stroke-width=".9" stroke-linecap="round" stroke-linejoin="round"/></svg><span style="line-height:1;white-space:nowrap;-webkit-text-stroke:.2px #42343a">MP4</span></div>
<div class="btn" style="left:416.5px;top:421.7px;width:138px;height:14.7px;background:linear-gradient(100deg,#69555a 0%,#69525a 50%,#684c59 100%);display:flex;align-items:center;justify-content:center;gap:3.500px;padding-top:1.200px;color:#42343a;font-size:6.6px"><svg width="5.200" height="6.900" viewBox="0 0 6 8"><path d="M.6 3.200v1.600M1.800 2v4M3 .8v6.400M4.200 2.400v3.200M5.400 3.200v1.600" fill="none" stroke="#42343a" stroke-width=".8" stroke-linecap="round"/></svg><span style="line-height:1;white-space:nowrap;-webkit-text-stroke:.2px #42343a">WAV</span></div>
<div class="btn" style="left:557.1px;top:421.7px;width:138px;height:14.7px;background:linear-gradient(100deg,#d28aa2 0%,#cc829c 45%,#b36c8c 100%);display:flex;align-items:center;justify-content:center;gap:3.500px;padding-top:1.200px;color:#6c2a50;font-size:6.6px"><svg width="5.200" height="6.900" viewBox="0 0 6 8"><path d="M.6 1.200Q.600 .500 1.300 .500H3.800L5.500 2.300V6.800Q5.500 7.500 4.800 7.500H1.300Q.6 7.500 .6 6.800z" fill="none" stroke="#6c2a50" stroke-width=".9"/><path d="M2 4.300h2.200M2 5.700h2.200" stroke="#6c2a50" stroke-width=".7"/></svg><span style="line-height:1;white-space:nowrap;-webkit-text-stroke:.2px #6c2a50">SRT</span></div>
<div class="btn" style="left:135.3px;top:437.8px;width:138px;height:13.5px;background:linear-gradient(100deg,#bebe46 0%,#baba44 50%,#a6a63c 100%);display:flex;align-items:center;justify-content:center;gap:3.500px;padding-top:1.200px;color:#55561e;font-size:6.6px"><svg width="5.200" height="6.900" viewBox="0 0 6 8"><path d="M.6 1.200Q.600 .500 1.300 .500H3.800L5.500 2.300V6.800Q5.500 7.500 4.800 7.500H1.300Q.6 7.500 .6 6.800z" fill="none" stroke="#55561e" stroke-width=".9"/><path d="M2 4.300h2.200M2 5.700h2.200" stroke="#55561e" stroke-width=".7"/></svg><span style="line-height:1;white-space:nowrap;-webkit-text-stroke:.2px #55561e">VTT</span></div>
<div class="btn" style="left:275.9px;top:437.8px;width:138px;height:13.5px;background:linear-gradient(100deg,#69555a 0%,#69525a 50%,#684c59 100%);display:flex;align-items:center;justify-content:center;gap:3.500px;padding-top:1.200px;color:#42343a;font-size:6.6px"><svg width="5.200" height="6.900" viewBox="0 0 6 8"><path d="M2 6V1.600l3.200-.8V5.200" fill="none" stroke="#42343a" stroke-width=".8"/><circle cx="1.400" cy="6" r=".9" fill="#42343a"/><circle cx="4.600" cy="5.300" r=".9" fill="#42343a"/></svg><span style="line-height:1;white-space:nowrap;-webkit-text-stroke:.2px #42343a">MP3</span></div>
<div class="btn" style="left:416.5px;top:437.8px;width:138px;height:13.5px;background:linear-gradient(100deg,#69555a 0%,#69525a 50%,#684c59 100%);display:flex;align-items:center;justify-content:center;gap:3.500px;padding-top:1.200px;color:#42343a;font-size:6.6px"><svg width="5.200" height="6.900" viewBox="0 0 6 8"><rect x=".6" y="1.800" width="4.800" height="5" rx=".8" fill="none" stroke="#42343a" stroke-width=".8"/><path d="M1.800 1.800V.8h2.400v1" fill="none" stroke="#42343a" stroke-width=".8"/></svg><span style="line-height:1;white-space:nowrap;-webkit-text-stroke:.2px #42343a">Clips</span></div>
<div class="btn" style="left:557.1px;top:437.8px;width:138px;height:13.5px;background:linear-gradient(100deg,#69555a 0%,#69525a 50%,#684c59 100%);display:flex;align-items:center;justify-content:center;gap:3.500px;padding-top:1.200px;color:#42343a;font-size:6.6px"><svg width="5.200" height="6.900" viewBox="0 0 6 8"><path d="M.6 2.500L3 1.200l2.400 1.300L3 3.800zM.6 4L3 5.300 5.400 4M.6 5.500L3 6.800l2.400-1.300" fill="none" stroke="#42343a" stroke-width=".7" stroke-linejoin="round"/></svg><span style="line-height:1;white-space:nowrap;-webkit-text-stroke:.2px #42343a">Stems</span></div>
<div class="a" style="left:0;top:-2px;width:699.500px;height:455.300px;border:1px solid #474745;border-radius:0 0 9px 9px"></div>
</div>
</body></html>
